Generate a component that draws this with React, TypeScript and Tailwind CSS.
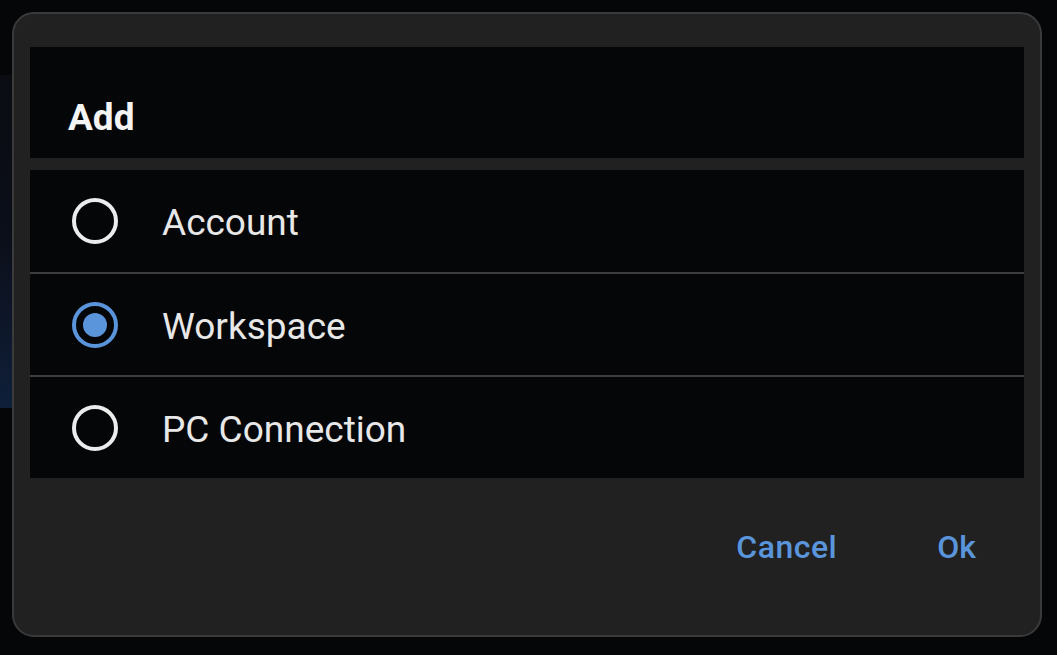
import React, { useState } from "react";

const options = ["Account", "Workspace", "PC Connection"];

const Radio: React.FC<{ checked: boolean }> = ({ checked }) => (
  <span
    className={[
      "flex items-center justify-center w-[46px] h-[46px] rounded-full border-[4px] shrink-0",
      checked ? "border-[#5a95dc]" : "border-[#ececec]",
    ].join(" ")}
  >
    {checked && <span className="block w-[24px] h-[24px] rounded-full bg-[#5a95dc]" />}
  </span>
);

export default function App() {
  const [selected, setSelected] = useState("Workspace");

  return (
    <div
      className="relative w-[1057px] h-[655px] bg-[#040608] overflow-hidden"
      style={{ fontFamily: "Roboto, 'Noto Sans', sans-serif" }}
    >
      {/* app behind the dialog, only a sliver shows */}
      <div className="absolute left-0 top-[75px] w-[14px] h-[333px] bg-gradient-to-b from-[#0a0c12] via-[#0b0f1a] to-[#0f1f3a]" />

      <div className="relative p-[12px]">
        <div className="flex flex-col w-[1030px] h-[625px] rounded-[22px] border-2 border-[#3a3a3a] bg-[#212121] px-[16px] pt-[33px]">
          {/* Title */}
          <div className="flex items-center h-[111px] bg-[#040608] pl-[38px] pt-[29px]">
            <span className="text-[37px] leading-none font-bold text-[#f4f4f4]">Add</span>
          </div>

          {/* Options */}
          <ul className="mt-[12px] flex flex-col bg-[#040608]">
            {options.map((opt, i) => (
              <li
                key={opt}
                onClick={() => setSelected(opt)}
                className={[
                  "flex items-center pl-[42px] gap-[44px] cursor-pointer",
                  i > 0 ? "h-[103px] border-t-2 border-[#3c3c3c]" : "h-[102px]",
                ].join(" ")}
              >
                <Radio checked={selected === opt} />
                <span className="text-[37px] leading-none text-[#e8e8e8] pt-[3px]">{opt}</span>
              </li>
            ))}
          </ul>

          {/* Footer buttons */}
          <div className="flex justify-end items-start gap-[100px] pr-[48px] pt-[53px]">
            <button className="text-[32px] leading-[32px] font-medium text-[#5a95dc] tracking-[0.5px]">
              Cancel
            </button>
            <button className="text-[32px] leading-[32px] font-medium text-[#5a95dc]">Ok</button>
          </div>
        </div>
      </div>
    </div>
  );
}
